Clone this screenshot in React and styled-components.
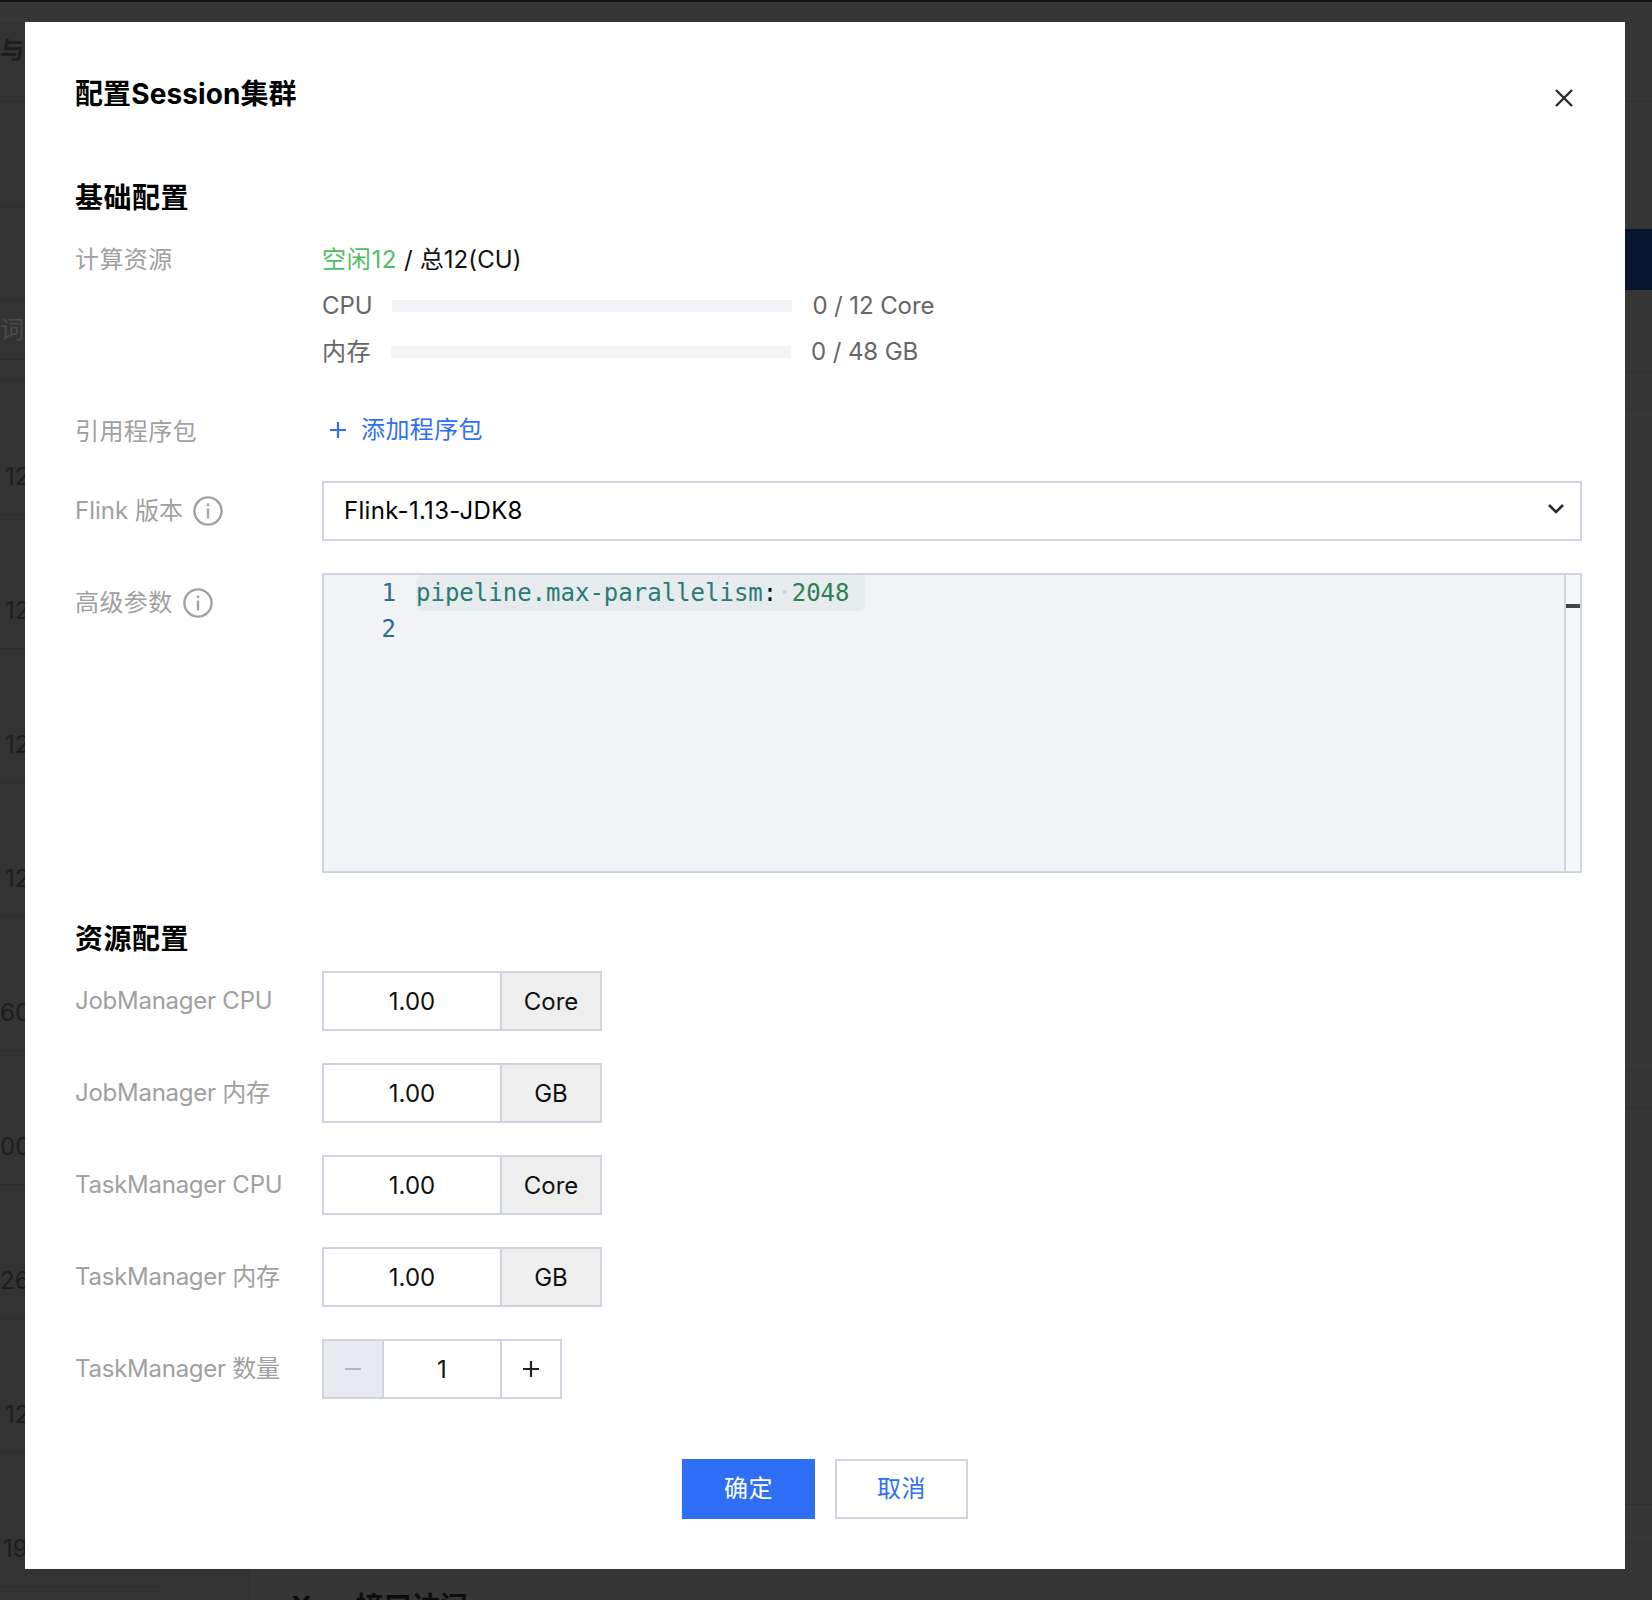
import React from "react";
import styled, { createGlobalStyle } from "styled-components";

const SANS = `"Inter", "Noto Sans CJK SC", sans-serif`;
const BORDER = "#cfd5de";
const BLUE = "#2f6ff6";

const resourceRows = [
  { label: "JobManager CPU", unit: "Core" },
  { label: "JobManager 内存", unit: "GB" },
  { label: "TaskManager CPU", unit: "Core" },
  { label: "TaskManager 内存", unit: "GB" },
];

const listRows = [
  { height: 80, pad: 14, text: "与", strong: true },
  { height: 105 },
  { height: 94 },
  { height: 59, pad: 14, text: "词", faint: true },
  { height: 21 },
  { height: 134, pad: 81, text: "12", inset: 5 },
  { height: 134, pad: 81, text: "12", inset: 5 },
  { height: 134, pad: 81, text: "12", inset: 5 },
  { height: 134, pad: 81, text: "12", inset: 5 },
  { height: 134, pad: 81, text: "60" },
  { height: 134, pad: 81, text: "00" },
  { height: 134, pad: 81, text: "26" },
  { height: 134, pad: 81, text: "12", inset: 5 },
  { height: 134, pad: 81, text: "19", inset: 3 },
];

const railBands = [
  { height: 80, line: true },
  { height: 127 },
  { height: 61, fill: "#07152f" },
  { height: 82, line: true },
  { height: 38, line: true },
  { height: 661, line: true },
  { height: 38, line: true },
  { height: 396, line: true },
  { height: 38, line: true },
];

function InfoIcon() {
  return (
    <InfoSvg viewBox="0 0 30 30" fill="none">
      <circle cx="15" cy="15" r="13.6" stroke="#a3a3a3" strokeWidth="2.4" />
      <rect x="13.8" y="7.5" width="2.4" height="2.6" fill="#a3a3a3" />
      <rect x="13.8" y="12.5" width="2.4" height="10" fill="#a3a3a3" />
    </InfoSvg>
  );
}

function App() {
  return (
    <Page>
      <GlobalStyle />
      <TopStripe />
      <TopBar />
      <Backdrop>
        <ListColumn>
          {listRows.map((row, i) => (
            <ListRow
              key={i}
              $height={row.height}
              $pad={row.pad}
              $inset={row.inset}
              $faint={row.faint}
              $strong={row.strong}
            >
              {row.text}
            </ListRow>
          ))}
        </ListColumn>
        <RailColumn>
          {railBands.map((band, i) => (
            <RailBand key={i} $height={band.height} $fill={band.fill} $line={band.line} />
          ))}
          <RailHeading>
            <span>X</span>
            <span>接口访问</span>
          </RailHeading>
        </RailColumn>
      </Backdrop>

      <Modal>
        <Header>
          <Title>配置Session集群</Title>
          <CloseIcon viewBox="0 0 18 18" fill="none">
            <path d="M1 1L17 17M17 1L1 17" stroke="#2b2b2b" strokeWidth="2.4" />
          </CloseIcon>
        </Header>

        <SectionTitle $after={19}>基础配置</SectionTitle>
        <FormRow>
          <TextLabel>计算资源</TextLabel>
          <div>
            <UsageLine>
              <Free>空闲12</Free> / 总12(CU)
            </UsageLine>
            <MeterLine>
              CPU
              <Meter />
              0 / 12 Core
            </MeterLine>
            <MeterLine>
              <MeterName>内存</MeterName>
              <Meter />
              0 / 48 GB
            </MeterLine>
          </div>
        </FormRow>

        <FormRow $top={33}>
          <TextLabel $shift={1}>引用程序包</TextLabel>
          <AddLink>
            <svg width="16" height="16" viewBox="0 0 16 16" fill="none">
              <path d="M8 0V16M0 8H16" stroke={BLUE} strokeWidth="2.2" />
            </svg>
            添加程序包
          </AddLink>
        </FormRow>

        <FormRow $top={26}>
          <FieldLabel>
            Flink 版本
            <InfoIcon />
          </FieldLabel>
          <Select>
            Flink-1.13-JDK8
            <Chevron viewBox="0 0 16 10" fill="none">
              <path d="M1 1L8 8L15 1" stroke="#2b2b2b" strokeWidth="2.6" />
            </Chevron>
          </Select>
        </FormRow>

        <FormRow $top={32}>
          <FieldLabel $cjk>
            高级参数
            <InfoIcon />
          </FieldLabel>
          <Editor>
            <Gutter>
              <div>1</div>
              <div>2</div>
            </Gutter>
            <CodeArea>
              <CodeLine>
                pipeline.max-parallelism<Colon>:</Colon>
                <Space>·</Space>
                <NumberToken>2048</NumberToken>
              </CodeLine>
            </CodeArea>
            <Overview>
              <OverviewMark />
            </Overview>
          </Editor>
        </FormRow>

        <SectionTitle $before={46} $after={12}>
          资源配置
        </SectionTitle>
        {resourceRows.map((row, i) => (
          <FormRow key={row.label} $top={i === 0 ? 0 : 32}>
            <FieldLabel $latin>{row.label}</FieldLabel>
            <FieldGroup>
              <Cell $width={180}>1.00</Cell>
              <Cell $width={102} $fill="#eeeeee" $shift={1}>
                {row.unit}
              </Cell>
            </FieldGroup>
          </FormRow>
        ))}
        <FormRow $top={32}>
          <FieldLabel $latin>TaskManager 数量</FieldLabel>
          <FieldGroup>
            <Cell $width={62} $fill="#e8eaef">
              <svg width="16" height="2" viewBox="0 0 16 2">
                <rect width="16" height="2" fill="#b4b7bd" />
              </svg>
            </Cell>
            <Cell $width={120} $shift={1}>1</Cell>
            <Cell $width={62}>
              <svg width="18" height="18" viewBox="0 0 18 18" fill="none">
                <path d="M9 1V17M1 9H17" stroke="#222" strokeWidth="2.2" />
              </svg>
            </Cell>
          </FieldGroup>
        </FormRow>

        <Footer>
          <Button $primary>确定</Button>
          <Button>取消</Button>
        </Footer>
      </Modal>
    </Page>
  );
}

const GlobalStyle = createGlobalStyle`
  html, body {
    margin: 0;
    padding: 0;
    background: #343434;
  }
`;

const Page = styled.div`
  position: relative;
  width: 1652px;
  height: 1600px;
  overflow: hidden;
  background: #343434;
  font-family: ${SANS};
`;

const TopStripe = styled.div`
  height: 2px;
  background: #111;
`;

const TopBar = styled.div`
  height: 20px;
  background: #363636;
`;

const Backdrop = styled.div`
  display: grid;
  grid-template-columns: 250px 1fr;
  height: 1578px;
`;

const ListColumn = styled.div`
  display: flex;
  flex-direction: column;
  background: #333333;
  border-right: 1px solid #2f2f2f;
`;

const ListRow = styled.div`
  box-sizing: border-box;
  width: 160px;
  height: ${(p) => p.$height}px;
  padding: ${(p) => p.$pad || 0}px 0 0 ${(p) => p.$inset || 0}px;
  flex: none;
  border-bottom: 1px solid #2d2d2d;
  font-size: 24px;
  font-weight: ${(p) => (p.$strong ? 700 : 400)};
  line-height: 30px;
  overflow: hidden;
  color: ${(p) => (p.$faint ? "#4a4a4a" : "#1d1d1d")};
`;

const RailColumn = styled.div`
  display: flex;
  flex-direction: column;
  background: #363636;
`;

const RailBand = styled.div`
  flex: none;
  box-sizing: border-box;
  height: ${(p) => p.$height}px;
  background: ${(p) => p.$fill || "transparent"};
  border-bottom: ${(p) => (p.$line ? "1px solid #303030" : "none")};
`;

const RailHeading = styled.div`
  display: flex;
  gap: 44px;
  padding: 44px 0 0 41px;
  font-size: 28px;
  font-weight: 700;
  line-height: 40px;
  color: #0c0c0c;
`;

const Modal = styled.div`
  position: absolute;
  left: 25px;
  top: 22px;
  box-sizing: border-box;
  width: 1600px;
  height: 1547px;
  padding: 52px 43px 50px 50px;
  background: #fff;
  display: flex;
  flex-direction: column;
`;

const Header = styled.div`
  display: flex;
  justify-content: space-between;
  align-items: flex-start;
  padding-right: 9px;
`;

const Title = styled.div`
  font-size: 28px;
  font-weight: 700;
  line-height: 40px;
  letter-spacing: 0.1px;
  color: #000;
`;

const CloseIcon = styled.svg`
  width: 18px;
  height: 18px;
  margin-top: 15px;
`;

const SectionTitle = styled.div`
  margin-top: ${(p) => p.$before || 64}px;
  margin-bottom: ${(p) => p.$after}px;
  font-size: 28px;
  font-weight: 700;
  line-height: 40px;
  letter-spacing: 0.5px;
  color: #000;
`;

const FormRow = styled.div`
  display: grid;
  grid-template-columns: 247px 1fr;
  margin-top: ${(p) => p.$top || 0}px;
`;

const TextLabel = styled.div`
  padding-top: ${(p) => p.$shift || 0}px;
  font-size: 24px;
  line-height: 46px;
  letter-spacing: 0.4px;
  color: #a0a0a0;
`;

const FieldLabel = styled.div`
  display: flex;
  align-items: center;
  align-self: start;
  height: 60px;
  font-size: 24px;
  line-height: 30px;
  letter-spacing: ${(p) => (p.$latin ? "-0.25px" : p.$cjk ? "0.4px" : "0")};
  color: #a0a0a0;
`;

const InfoSvg = styled.svg`
  width: 30px;
  height: 30px;
  margin-left: 10px;
`;

const UsageLine = styled.div`
  font-size: 24px;
  line-height: 46px;
  letter-spacing: 0.1px;
  color: #111;
`;

const Free = styled.span`
  letter-spacing: 0.7px;
  color: #4fbf67;
`;

const MeterLine = styled.div`
  display: flex;
  align-items: center;
  gap: 20px;
  font-size: 24px;
  line-height: 46px;
  letter-spacing: -0.1px;
  color: #666;
`;

const MeterName = styled.span`
  letter-spacing: 0.5px;
`;

const Meter = styled.div`
  width: 400px;
  height: 12px;
  background: #f1f3f7;
`;

const AddLink = styled.div`
  display: flex;
  align-items: center;
  gap: 15px;
  height: 44px;
  padding-left: 8px;
  font-size: 24px;
  line-height: 30px;
  letter-spacing: 0.4px;
  color: ${BLUE};
`;

const Select = styled.div`
  box-sizing: border-box;
  display: flex;
  align-items: center;
  justify-content: space-between;
  height: 60px;
  padding: 0 16px 0 20px;
  border: 2px solid ${BORDER};
  font-size: 24px;
  line-height: 30px;
  letter-spacing: 0.3px;
  color: #000;
`;

const Chevron = styled.svg`
  width: 16px;
  height: 10px;
  margin-bottom: 4px;
`;

const Editor = styled.div`
  box-sizing: border-box;
  display: flex;
  height: 300px;
  border: 2px solid ${BORDER};
  background: #f1f3f7;
  font-family: "DejaVu Sans Mono", monospace;
  font-size: 24px;
  line-height: 36px;
`;

const Gutter = styled.div`
  width: 72px;
  flex: none;
  text-align: right;
  color: #2b6f8a;
`;

const CodeArea = styled.div`
  flex: 1;
  padding-left: 20px;
`;

const CodeLine = styled.div`
  display: inline-block;
  height: 36px;
  padding-right: 16px;
  border-radius: 6px;
  background: #e6ebee;
  color: #2c7a78;
  white-space: pre;
`;

const Colon = styled.span`
  color: #111;
`;

const Space = styled.span`
  color: #c9d3d6;
`;

const NumberToken = styled.span`
  color: #2f7f57;
`;

const Overview = styled.div`
  box-sizing: border-box;
  width: 16px;
  flex: none;
  border-left: 2px solid ${BORDER};
  background: #f6f7fa;
`;

const OverviewMark = styled.div`
  height: 4px;
  margin-top: 29px;
  background: #444;
`;

const FieldGroup = styled.div`
  display: flex;
`;

const Cell = styled.div`
  box-sizing: border-box;
  display: flex;
  align-items: center;
  justify-content: center;
  width: ${(p) => p.$width}px;
  height: 60px;
  padding-top: ${(p) => p.$shift || 0}px;
  margin-right: -2px;
  border: 2px solid ${BORDER};
  background: ${(p) => p.$fill || "#fff"};
  font-size: 24px;
  color: #111;
`;

const Footer = styled.div`
  display: flex;
  justify-content: center;
  gap: 20px;
  margin-top: auto;
  margin-right: 7px;
`;

const Button = styled.div`
  box-sizing: border-box;
  display: flex;
  align-items: center;
  justify-content: center;
  width: 133px;
  height: 60px;
  font-size: 24px;
  line-height: 30px;
  letter-spacing: 0.4px;
  background: ${(p) => (p.$primary ? BLUE : "#fff")};
  color: ${(p) => (p.$primary ? "#fff" : BLUE)};
  border: 2px solid ${(p) => (p.$primary ? BLUE : BORDER)};
`;

export default App;
